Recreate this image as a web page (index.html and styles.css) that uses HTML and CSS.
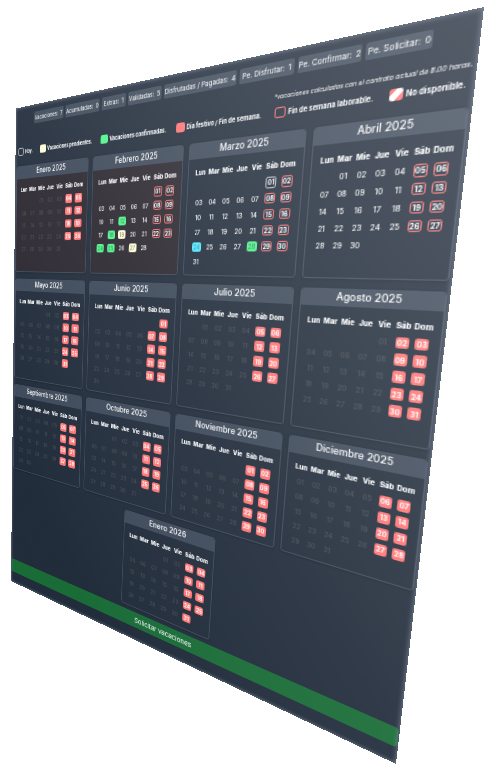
FILE: index.html
```html
<!DOCTYPE html>
<html lang="es">
<head>
<meta charset="utf-8">
<title>Vacaciones</title>
<link rel="stylesheet" href="styles.css">
</head>
<body>
<div class="tilt">
<main class="panel">
  <section class="stats">
    <span>Vacaciones: <em>7</em></span><span>Acumuladas: <em>0</em></span><span>Extras: <em>1</em></span><span>Validadas: <em>5</em></span><span>Disfrutadas / Pagadas: <em>4</em></span><span>Pe. Disfrutar: <em>1</em></span><span>Pe. Confirmar: <em>2</em></span><span>Pe. Solicitar: <em>0</em></span>
  </section>
  <p class="note">*vacaciones calculadas con el contrato actual de 8.00 horas.</p>
  <section class="legend">
    <div><i class="today"></i>Hoy.</div>
    <div><i class="pending"></i>Vacaciones pendientes.</div>
    <div><i class="confirmed"></i>Vacaciones confirmadas.</div>
    <div><i class="holiday"></i>Día festivo / Fin de semana.</div>
    <div><i class="workable"></i>Fin de semana laborable.</div>
    <div><i class="blocked"></i>No disponible.</div>
  </section>
  <section class="months" id="months"></section>
  <button class="request">Solicitar vacaciones</button>
</main>
</div>
<script src="calendar.js"></script>
</body>
</html>
```
FILE: styles.css
```css
* { box-sizing: border-box; }

html, body {
  margin: 0;
  width: 493px;
  height: 771px;
  overflow: hidden;
  background: #fff;
}

.tilt {
  width: 480px;
  height: 600px;
  transform-origin: 0 0;
  transform: matrix3d(0.566083, -0.217375, 0, -0.00084485, -0.00608, 0.9065, 0, 0.00020482, 0, 0, 1, 0, 16, 108.5, 0, 1);
}

.panel {
  zoom: 0.6;
  position: relative;
  display: flex;
  flex-direction: column;
  width: 800px;
  height: 1000px;
  padding: 13px 2.5px 5px;
  overflow: hidden;
  background: #1f2a39;
  color: #fff;
  font-family: Inter, "Noto Sans", sans-serif;
}

/* Diagonal sheen and soft rim over the whole panel */
.panel::after {
  content: "";
  position: absolute;
  inset: 0;
  background: linear-gradient(to top right, rgba(255, 255, 255, 0.01) 15%, rgba(255, 255, 255, 0.08) 52%, rgba(255, 255, 255, 0.24) 100%);
  box-shadow: inset 0 0 7px rgba(190, 202, 220, 0.6);
  pointer-events: none;
}

.stats {
  display: grid;
  grid-template-columns: 77px 82px 53px 68px 131px 84px 88px 80px;
  column-gap: 5px;
  justify-content: center;
  flex: none;
  height: 22.5px;
}

.stats span {
  display: flex;
  align-items: center;
  justify-content: center;
  gap: 5px;
  border-radius: 3px;
  background: #3b4758;
  font-size: 10.8px;
  white-space: nowrap;
}

.stats em { font-style: normal; }

.note {
  flex: none;
  height: 14px;
  margin: 20px 2px 0 0;
  line-height: 14px;
  text-align: right;
  font-size: 8.6px;
  font-style: italic;
  white-space: nowrap;
}

.legend {
  display: grid;
  grid-template-columns: 60.6px 152.2px 157.6px 169.1px 156.3px 90px;
  flex: none;
  height: 16px;
  margin: 6px 0 0 5.5px;
  font-size: 9.6px;
  font-weight: 700;
}

.legend div {
  display: flex;
  align-items: center;
  gap: 3.5px;
  white-space: nowrap;
}

.legend i {
  width: 16px;
  height: 15px;
  border-radius: 3.5px;
}

.pending { background: #fffdd6; }
.confirmed { background: #4df58a; }
.holiday { background: #ff7272; }
.today { border: 1.7px solid #b5bac2; }
.workable { border: 1.7px solid #ee6c6e; }
.selected { background: #4ce9ff; }
.legend .blocked { background: linear-gradient(133deg, #ff7272 0 27%, #fff 30% 63%, #ff7272 66%); }

.months {
  display: flex;
  flex-wrap: wrap;
  justify-content: center;
  align-content: flex-start;
  gap: 13px 10px;
  flex: none;
  height: 853.5px;
  padding-top: 20.2px;
}

.month {
  width: 191px;
  border: 1.7px solid #3b4758;
  border-radius: 5px;
  overflow: hidden;
  box-shadow: 0 1px 4px rgba(0, 0, 0, 0.2);
}

.month.past { background: #29252e; }

.month h2 {
  height: 24px;
  margin: 0;
  background: #3b4758;
  line-height: 23px;
  text-align: center;
  font-size: 14px;
  font-weight: 500;
}

.grid {
  display: grid;
  grid-template-columns: repeat(7, 24.1px);
  grid-auto-rows: 23.3px;
  justify-content: center;
  padding: 9px 0 11px;
  place-items: center;
  font-size: 10px;
  font-weight: 500;
}

.six { height: 208px; }
.five { height: 184.7px; }

.grid b { font-size: 10px; font-weight: 800; }

.grid span {
  display: flex;
  align-items: center;
  justify-content: center;
  width: 17px;
  height: 16px;
  border-radius: 3.5px;
}

.grid .off { color: #464b51; }
.grid .holiday, .grid .workable, .grid .today { font-size: 9.6px; font-weight: 700; }
.grid .confirmed { color: #2f8a55; }
.grid .pending { color: #8b8b78; }
.grid .selected { color: #3796a8; }

.request {
  flex: none;
  height: 30px;
  margin: 0 0 0 -1px;
  border: 0;
  border-radius: 4px;
  background: #176a35;
  color: #fff;
  font: 400 13px Inter, "Noto Sans", sans-serif;
}
```
FILE: calendar.js
```js
const names = ["Enero", "Febrero", "Marzo", "Abril", "Mayo", "Junio", "Julio", "Agosto",
  "Septiembre", "Octubre", "Noviembre", "Diciembre", "Enero"];
const weekdays = ["Lun", "Mar", "Mie", "Jue", "Vie", "Sáb", "Dom"];
const marks = {
  "1-12": "confirmed", "1-18": "confirmed", "1-19": "pending", "1-24": "confirmed",
  "1-25": "confirmed", "1-27": "pending", "2-1": "today", "2-24": "selected", "2-28": "confirmed"
};
const host = document.getElementById("months");

names.forEach((name, m) => {
  const first = (new Date(2025, m, 1).getDay() + 6) % 7;
  const total = new Date(2025, m + 1, 0).getDate();
  const open = m >= 1 && m <= 3;
  const card = document.createElement("article");
  card.className = "month " + (m < 8 ? "six" : "five") + (m < 2 ? " past" : "");
  let cells = weekdays.map(d => `<b>${d}</b>`).join("") + "<span></span>".repeat(first);
  for (let d = 1; d <= total; d++) {
    const weekend = (first + d - 1) % 7 > 4;
    const kind = marks[m + "-" + d] || (weekend ? (open ? "workable" : "holiday") : (open ? "" : "off"));
    cells += `<span class="${kind}">${String(d).padStart(2, "0")}</span>`;
  }
  card.innerHTML = `<h2>${name} ${m === 12 ? 2026 : 2025}</h2><div class="grid">${cells}</div>`;
  host.append(card);
});
```
